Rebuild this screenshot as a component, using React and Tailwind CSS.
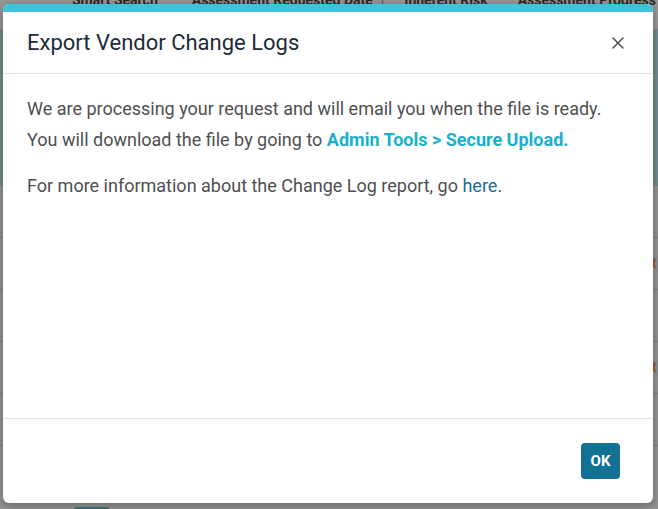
const rows = [
  { teal: true },
  { teal: true },
  { teal: true },
  {},
  { status: 'Draft' },
  {},
  { status: 'Draft' },
  {},
  {},
];

function BackgroundTable() {
  return (
    <div className="flex flex-col">
      <div className="h-[29px] overflow-hidden bg-[#969696] text-[14px] font-bold leading-none text-[#2a2a2a]">
        <div className="-mt-[7px] flex whitespace-nowrap">
          <span className="ml-[72px]">Smart Search</span>
          <span className="ml-[34px]">Assessment Requested Date</span>
          <span className="ml-[8px] text-[#555]">|</span>
          <span className="ml-[20px]">Inherent Risk</span>
          <span className="ml-[30px]">Assessment Progress</span>
        </div>
      </div>
      {rows.map((row, i) => (
        <div
          key={i}
          className={`flex h-[52px] items-center justify-end border-t border-[#7e7e7e] pr-[1px] ${row.teal ? 'bg-[#718a8b]' : 'bg-[#919191]'}`}
        >
          {row.status ? <span className="text-[15px] text-[#9a4f14]">{row.status}</span> : null}
        </div>
      ))}
      <div className="mt-[10px] flex">
        <div className="ml-[73px] h-[24px] w-[37px] rounded bg-[#3b6f74]" />
      </div>
    </div>
  );
}

function CloseIcon() {
  return (
    <svg width="12" height="12" viewBox="0 0 12 12" fill="none" stroke="#4b5257" strokeWidth="1.5" strokeLinecap="round">
      <path d="M1 1L11 11M11 1L1 11" />
    </svg>
  );
}

function ExportModal() {
  return (
    <div className="absolute left-[3px] top-[4px] flex h-[499px] w-[650px] flex-col overflow-hidden rounded-[6px] bg-white shadow-[0_2px_8px_rgba(0,0,0,0.3)]">
      <div className="h-[8px] bg-[#3ec4da]" />
      <div className="flex h-[62px] items-center justify-between border-b border-[#e3e3e3] pl-[24px] pr-[29px]">
        <h2 className="text-[22px] font-normal text-[#1c2b3a]">Export Vendor Change Logs</h2>
        <button type="button" className="flex h-[12px] w-[12px] items-center justify-center">
          <CloseIcon />
        </button>
      </div>
      <div className="flex-1 pl-[24px] pr-[24px] pt-[19px] text-[18px] leading-[31px] text-[#4f4f4f]">
        <p className="mb-[15px]">
          We are processing your request and will email you when the file is ready.
          <br />
          You will download the file by going to{' '}
          <span className="font-bold text-[#17b1cd]">Admin Tools &gt; Secure Upload.</span>
        </p>
        <p>
          For more information about the Change Log report, go <span className="text-[#1b6e96]">here</span>.
        </p>
      </div>
      <div className="flex h-[85px] items-center justify-end border-t border-[#e3e3e3] pr-[33px]">
        <button
          type="button"
          className="flex h-[36px] w-[39px] items-center justify-center rounded-[4px] bg-[#137196] text-[15px] font-bold text-white"
        >
          OK
        </button>
      </div>
    </div>
  );
}

export default function App() {
  return (
    <div className="relative h-[509px] w-[658px] overflow-hidden bg-[#919191] font-['Roboto',sans-serif]">
      <BackgroundTable />
      <ExportModal />
    </div>
  );
}
